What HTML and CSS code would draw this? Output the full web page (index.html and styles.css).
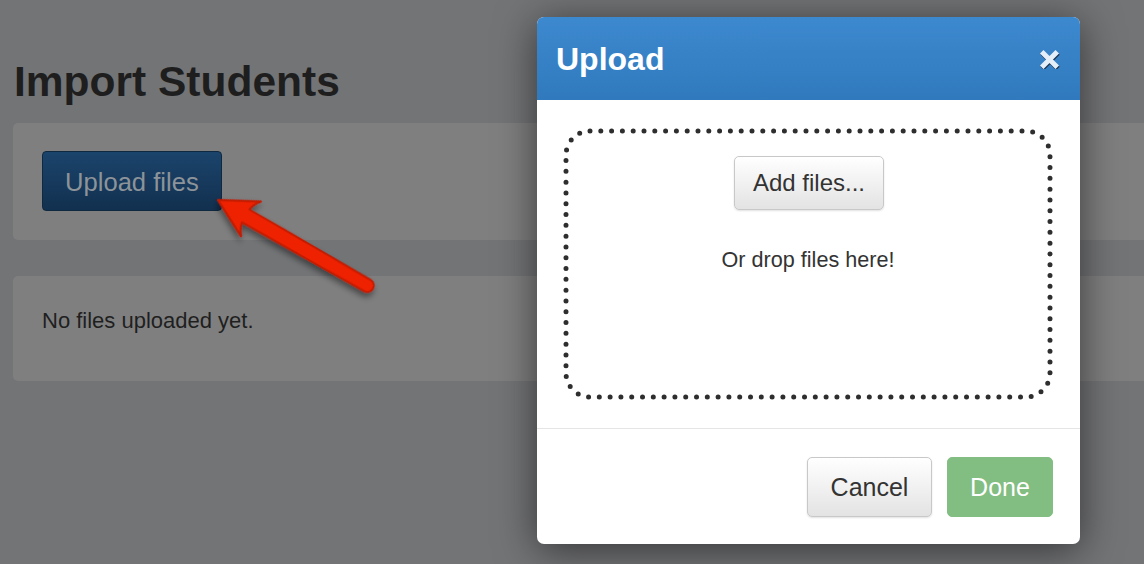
FILE: index.html
```html
<!DOCTYPE html>
<html lang="en">
<head>
    <meta charset="UTF-8">
    <meta name="viewport" content="width=device-width, initial-scale=1.0">
    <title>Import Students</title>
    <link rel="stylesheet" href="styles.css">
</head>
<body>
    <div class="page">
        <h1>Import Students</h1>

        <div class="well">
            <button class="btn-upload">Upload files</button>
        </div>

        <div class="well well-list">
            <p>No files uploaded yet.</p>
        </div>
    </div>

    <!-- Annotation arrow pointing at the upload button -->
    <svg class="arrow" width="1144" height="564" viewBox="0 0 1144 564">
        <defs>
            <filter id="arrowShadow" x="-20%" y="-20%" width="140%" height="160%">
                <feDropShadow dx="1" dy="4" stdDeviation="3" flood-color="#000" flood-opacity="0.45"/>
            </filter>
        </defs>
        <g transform="translate(218 200) rotate(29.8)" filter="url(#arrowShadow)">
            <path d="M0 0 L38 -20 Q33 -14 32 -7.5 L172 -6.5 A6.5 6.5 0 0 1 172 6.5 L32 7.5 Q33 14 38 20 Z"
                  fill="#ee2200" stroke="#c41a00" stroke-width="2" stroke-linejoin="round"/>
        </g>
    </svg>

    <!-- Upload modal -->
    <div class="modal">
        <div class="modal-header">
            <h2>Upload</h2>
            <svg class="close" width="20" height="20" viewBox="0 0 20 20">
                <path d="M3.5 4.5 L15.5 16.5 M15.5 4.5 L3.5 16.5" stroke="#1b3550" stroke-width="5" stroke-linecap="square" transform="translate(0.6 1.2)"/>
                <path d="M3.5 4.5 L15.5 16.5 M15.5 4.5 L3.5 16.5" stroke="#e4eef8" stroke-width="5" stroke-linecap="square"/>
            </svg>
        </div>
        <div class="modal-body">
            <div class="dropzone">
                <svg class="dots">
                    <rect x="0" y="0" width="100%" height="100%" rx="24" ry="24"/>
                </svg>
                <button class="btn btn-add">Add files...</button>
                <p>Or drop files here!</p>
            </div>
        </div>
        <div class="modal-footer">
            <button class="btn btn-cancel">Cancel</button>
            <button class="btn btn-done">Done</button>
        </div>
    </div>
</body>
</html>
```

FILE: styles.css
```css
html, body {
    margin: 0;
    padding: 0;
    height: 100%;
}
body {
    font-family: "Liberation Sans", Arial, sans-serif;
    background-color: #737476;
    color: #1f1f1f;
    overflow: hidden;
    position: relative;
}
.page {
    padding: 0 0 0 13px;
}
h1 {
    margin: 0;
    padding-top: 59px;
    font-size: 42.5px;
    line-height: 46px;
    font-weight: bold;
    color: #1e1e1e;
    margin-left: 1px;
}
.well {
    background-color: #7f7f80;
    border-radius: 5px;
    margin-top: 18px;
    margin-right: -10px;
    padding: 28px 29px 29px;
}
.btn-upload {
    height: 60px;
    padding: 2px 22px 0;
    font-family: "Liberation Sans", Arial, sans-serif;
    font-size: 25.6px;
    color: #8c9399;
    background: linear-gradient(#1b446c, #12304f);
    border: 1px solid #0f2940;
    border-radius: 4px;
}
.well-list {
    margin-top: 36px;
    padding: 30px 29px 45px;
}
.well-list p {
    margin: 0;
    font-size: 22px;
    line-height: 30px;
}
.arrow {
    position: absolute;
    left: 0;
    top: 0;
    pointer-events: none;
}
.modal {
    position: absolute;
    left: 537px;
    top: 17px;
    width: 543px;
    background-color: white;
    border-radius: 7px;
    box-shadow: 0 6px 40px rgba(0, 0, 0, 0.55);
    overflow: hidden;
}
.modal-header {
    height: 83px;
    display: flex;
    align-items: center;
    justify-content: space-between;
    padding: 0 20px 0 19px;
    background: linear-gradient(#3d89cf, #3079bd);
}
.modal-header h2 {
    margin: 0;
    color: white;
    font-size: 32px;
    line-height: 36px;
    font-weight: bold;
}
.close {
    display: block;
}
.modal-body {
    padding: 29px 28px 29px 27px;
}
.dropzone {
    position: relative;
    height: 270px;
    box-sizing: border-box;
    padding-top: 27px;
    display: flex;
    flex-direction: column;
    align-items: center;
}
.dots {
    position: absolute;
    left: 2px;
    top: 2px;
    width: calc(100% - 4px);
    height: calc(100% - 4px);
    overflow: visible;
}
.dots rect {
    fill: none;
    stroke: #2e2e2e;
    stroke-width: 5;
    stroke-linecap: round;
    stroke-dasharray: 0 10.8;
}
.dropzone p {
    margin: 35px 0 0;
    font-size: 21.6px;
    line-height: 30px;
    color: #333;
}
.btn {
    font-family: "Liberation Sans", Arial, sans-serif;
    color: #333;
    border: 1px solid #c8c8c8;
    border-radius: 5px;
    background: linear-gradient(#ffffff, #e3e3e3);
    box-shadow: 0 1px 2px rgba(0, 0, 0, 0.12);
    cursor: pointer;
}
.btn-add {
    position: relative;
    width: 150px;
    height: 54px;
    font-size: 24px;
    margin-left: 2px;
}
.modal-footer {
    border-top: 1px solid #e5e5e5;
    padding: 28px 27px 27px;
    display: flex;
    justify-content: flex-end;
    gap: 15px;
}
.btn-cancel {
    width: 125px;
    height: 60px;
    font-size: 25px;
}
.btn-done {
    width: 106px;
    height: 60px;
    font-size: 25px;
    color: white;
    background: #82bd82;
    border-color: #82bd82;
    box-shadow: none;
}
```
